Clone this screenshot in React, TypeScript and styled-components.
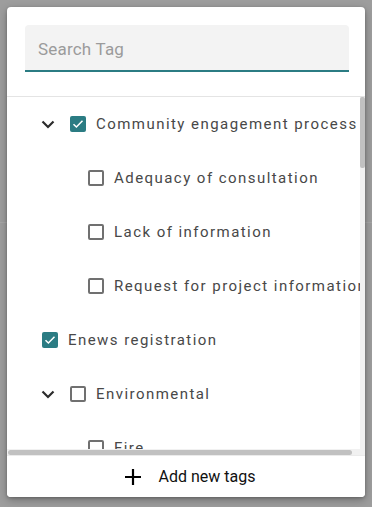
import React from "react";
import styled, { createGlobalStyle } from "styled-components";

const Global = createGlobalStyle`
  html, body { margin: 0; padding: 0; }
  body {
    background: #9d9d9d;
    font-family: Roboto, "Noto Sans", Arial, sans-serif;
    width: 372px;
    height: 507px;
    overflow: hidden;
  }
`;

const Page = styled.div`
  position: relative;
  width: 372px;
  height: 507px;
  display: flex;
  align-items: flex-start;
  background: linear-gradient(
    to bottom,
    transparent 222px,
    #a6a6a6 222px,
    #a6a6a6 223px,
    transparent 223px
  );
`;

const Dialog = styled.div`
  margin: 7px 0 0 7px;
  width: 358px;
  height: 490px;
  background: #fff;
  border-radius: 4px;
  box-shadow: 0 3px 8px rgba(0, 0, 0, 0.28), 0 1px 3px rgba(0, 0, 0, 0.2);
  display: flex;
  flex-direction: column;
  overflow: hidden;
`;

const SearchSection = styled.div`
  padding: 18px 16px 24px 18px;
  border-bottom: 1px solid #e4e4e4;
`;

const SearchField = styled.div`
  height: 45px;
  background: #f3f3f3;
  border-radius: 4px 4px 0 0;
  border-bottom: 2px solid #2b7c83;
  display: flex;
  align-items: center;
  padding: 0 13px;
`;

const SearchInput = styled.input`
  border: none;
  outline: none;
  background: transparent;
  width: 100%;
  font-family: Roboto, Arial, sans-serif;
  font-size: 17px;
  letter-spacing: 0.2px;
  color: #333;
  padding: 0;
  margin-top: 2px;
  &::placeholder { color: #9b9b9b; }
`;

const ListWrap = styled.div`
  position: relative;
  flex: 1;
  min-height: 0;
`;

const List = styled.div`
  height: 100%;
  overflow: hidden;
`;

const VTrack = styled.div`
  position: absolute;
  top: 0;
  right: 0;
  bottom: 6px;
  width: 5px;
  background: #f1f1f1;
`;

const VThumb = styled.div`
  width: 5px;
  height: 71px;
  border-radius: 2px;
  background: #c1c1c1;
`;

const HTrack = styled.div`
  position: absolute;
  left: 0;
  right: 0;
  bottom: 0;
  height: 6px;
  background: #f1f1f1;
  display: flex;
  align-items: center;
  padding-left: 1px;
`;

const HThumb = styled.div`
  width: 344px;
  height: 5px;
  border-radius: 3px;
  background: #c1c1c1;
`;

const Tree = styled.div`
  width: max-content;
  min-width: 100%;
`;

const Row = styled.div<{ $indent: number }>`
  height: 54px;
  display: flex;
  align-items: center;
  padding-left: ${(p) => p.$indent}px;
  padding-right: 4px;
  white-space: nowrap;
`;

const Toggle = styled.span`
  width: 29px;
  display: inline-flex;
  align-items: center;
  color: #2c2c2c;
`;

const Box = styled.span<{ $checked: boolean }>`
  box-sizing: border-box;
  width: 16px;
  height: 16px;
  flex: none;
  border-radius: 2px;
  border: ${(p) => (p.$checked ? "none" : "2px solid #707070")};
  background: ${(p) => (p.$checked ? "#2b7c83" : "#fff")};
  display: inline-flex;
  align-items: center;
  justify-content: center;
  margin-right: 10px;
`;

const Label = styled.span`
  font-size: 15px;
  letter-spacing: 1.45px;
  color: #484848;
`;

const Footer = styled.button`
  height: 42px;
  flex: none;
  border: none;
  border-top: 1px solid #ebebeb;
  background: #fff;
  display: flex;
  align-items: center;
  justify-content: center;
  gap: 18px;
  padding: 0 0 0 8px;
  font-family: Roboto, Arial, sans-serif;
  font-size: 16px;
  color: #111;
  cursor: pointer;
`;

const Chevron = () => (
  <svg width="14" height="9" viewBox="0 0 14 9">
    <path d="M1.5 1.5 L7 7 L12.5 1.5" fill="none" stroke="currentColor" strokeWidth="2.2" />
  </svg>
);

const Check = () => (
  <svg width="12" height="10" viewBox="0 0 12 10">
    <path d="M1.5 5.2 L4.4 8 L10.5 1.8" fill="none" stroke="#fff" strokeWidth="1.5" />
  </svg>
);

const Plus = () => (
  <svg width="16" height="16" viewBox="0 0 16 16">
    <path d="M8 0 V16 M0 8 H16" stroke="#000" strokeWidth="2.2" />
  </svg>
);

type Node = { label: string; level: number; checked?: boolean; parent?: boolean };

const nodes: Node[] = [
  { label: "Community engagement process", level: 0, checked: true, parent: true },
  { label: "Adequacy of consultation", level: 1 },
  { label: "Lack of information", level: 1 },
  { label: "Request for project information", level: 1 },
  { label: "Enews registration", level: 0, checked: true },
  { label: "Environmental", level: 0, parent: true },
  { label: "Fire", level: 1 },
  { label: "Flooding", level: 1 },
  { label: "Noise", level: 1 },
  { label: "Dust", level: 1 },
];

const indentFor = (n: Node) => (n.level === 1 ? 81 : n.parent ? 34 : 35);

export default function App() {
  return (
    <>
      <Global />
      <Page>
        <Dialog>
          <SearchSection>
            <SearchField>
              <SearchInput placeholder="Search Tag" />
            </SearchField>
          </SearchSection>
          <ListWrap>
            <List>
              <Tree>
                {nodes.map((n, i) => (
                  <Row key={i} $indent={indentFor(n)}>
                    {n.parent && (
                      <Toggle>
                        <Chevron />
                      </Toggle>
                    )}
                    <Box $checked={!!n.checked}>{n.checked && <Check />}</Box>
                    <Label>{n.label}</Label>
                  </Row>
                ))}
              </Tree>
            </List>
            <VTrack>
              <VThumb />
            </VTrack>
            <HTrack>
              <HThumb />
            </HTrack>
          </ListWrap>
          <Footer>
            <Plus />
            <span>Add new tags</span>
          </Footer>
        </Dialog>
      </Page>
    </>
  );
}
